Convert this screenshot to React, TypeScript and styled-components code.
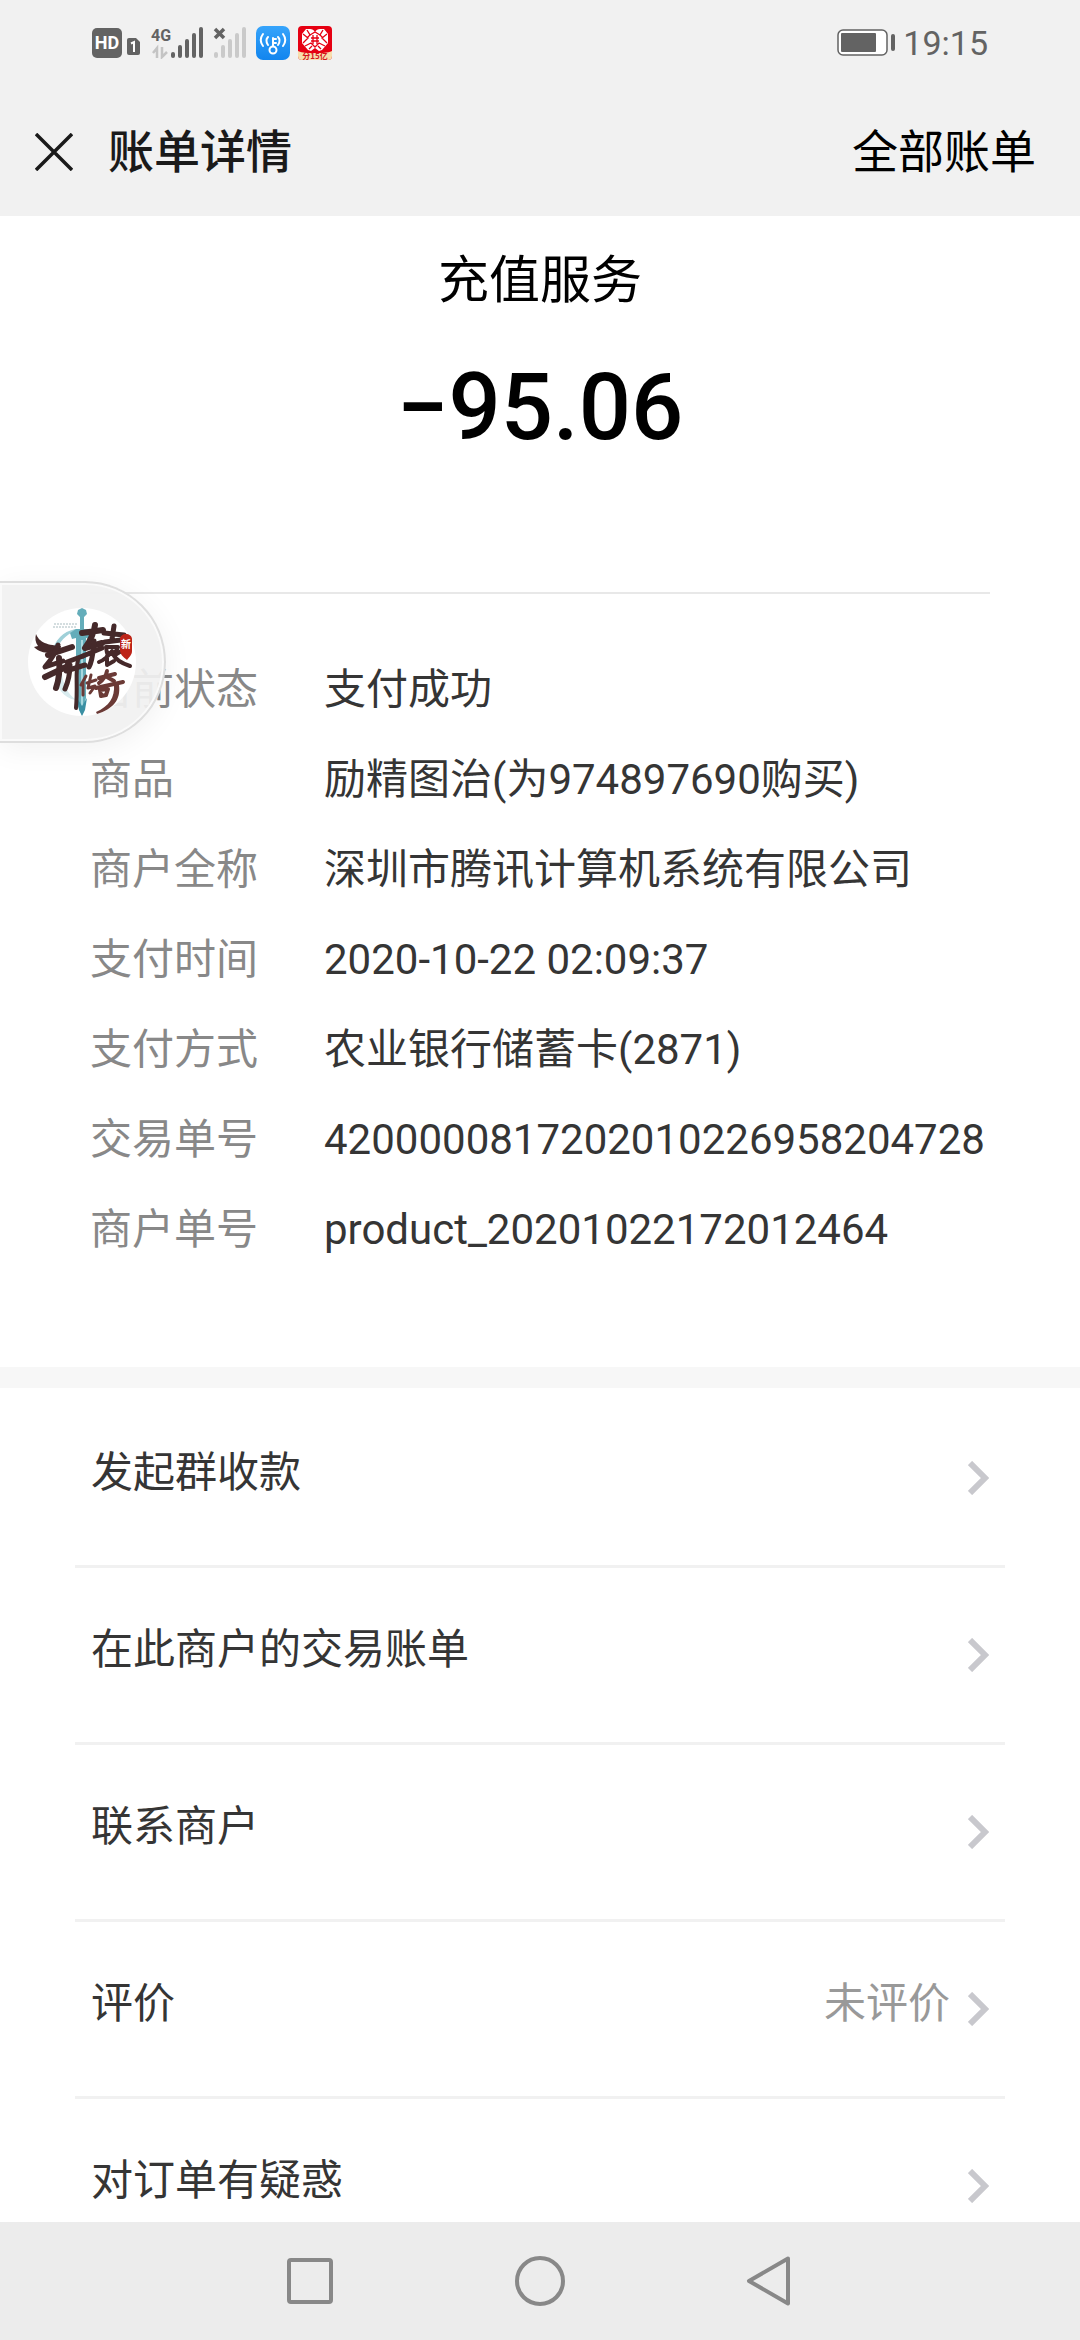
import styled, { createGlobalStyle } from "styled-components";

// colors
const barGrey = "#f1f1f1";
const statusGrey = "#636363";
const textPrimary = "#353535";
const textLabel = "#888888";
const textNote = "#999999";
const white = "#ffffff";

const details = [
  { label: "当前状态", value: "支付成功" },
  { label: "商品", value: "励精图治(为974897690购买)" },
  { label: "商户全称", value: "深圳市腾讯计算机系统有限公司" },
  { label: "支付时间", value: "2020-10-22 02:09:37" },
  { label: "支付方式", value: "农业银行储蓄卡(2871)" },
  { label: "交易单号", value: "4200000817202010226958204728" },
  { label: "商户单号", value: "product_20201022172012464" },
];

const actions = [
  { label: "发起群收款" },
  { label: "在此商户的交易账单" },
  { label: "联系商户" },
  { label: "评价", note: "未评价" },
  { label: "对订单有疑惑" },
];

const SignalBars = ({ color }: { color: string }) => (
  <g fill={color}>
    <rect x="18" y="25" width="4" height="6" rx="2" />
    <rect x="25" y="18" width="4" height="13" rx="2" />
    <rect x="32" y="12" width="4" height="19" rx="2" />
    <rect x="39" y="6" width="4" height="25" rx="2" />
    <rect x="46" y="0" width="4" height="31" rx="2" />
  </g>
);

const StatusIcons = () => (
  <IconStrip>
    <svg width="30" height="30" viewBox="0 0 30 30">
      <rect width="30" height="30" rx="5" fill={statusGrey} />
      <StatusText x="15" y="21" fontSize="18" fill={white}>
        HD
      </StatusText>
    </svg>
    <svg width="25" height="30" viewBox="-5 0 25 30">
      <path
        d="M2 10h7l4 4v11a2 2 0 0 1-2 2H2a2 2 0 0 1-2-2V12a2 2 0 0 1 2-2z"
        fill={statusGrey}
      />
      <path d="M4 15.500L7 14v10" stroke={white} strokeWidth="2" fill="none" />
    </svg>
    <svg width="56" height="32" viewBox="-6 0 56 32">
      <SignalBars color={statusGrey} />
      <StatusText x="8" y="14" fontSize="16" fill={statusGrey}>
        4G
      </StatusText>
      <g stroke="#c4c4c4" strokeWidth="2.500" fill="none">
        <path d="M0 26l4-5v10" />
        <path d="M9 20v10l5-5" />
      </g>
    </svg>
    <svg width="43" height="32" viewBox="7 0 43 32">
      <SignalBars color="#cacaca" />
      <path d="M19 2l9 9M28 2l-9 9" stroke={statusGrey} strokeWidth="3.500" />
    </svg>
    <WifiKeyIcon />
    <EnvelopeIcon />
  </IconStrip>
);

const WifiKeyIcon = () => (
  <svg width="44" height="34" viewBox="-10 0 44 34">
    <defs>
      <linearGradient id="wifiBlue" x1="0" y1="0" x2="0" y2="1">
        <stop offset="0" stopColor="#36a4fb" />
        <stop offset="1" stopColor="#1285ee" />
      </linearGradient>
    </defs>
    <rect width="34" height="34" rx="7" fill="url(#wifiBlue)" />
    <g stroke={white} strokeWidth="2" fill="none" strokeLinecap="round">
      <circle cx="17" cy="24" r="3.500" />
      <path d="M17 20v-8M17 13h3M17 17h3" />
      <path d="M12 11c-2 2-2 5 0 8M22 11c2 2 2 5 0 8" />
      <path d="M7 8c-3 4-3 8 0 12M27 8c3 4 3 8 0 12" />
    </g>
  </svg>
);

const EnvelopeIcon = () => (
  <svg width="42" height="34" viewBox="-8 0 42 34">
    <rect width="34" height="34" rx="4" fill="#e60012" />
    <path
      d="M12 3c2 0 4 1 5 3 1-2 3-3 5-3h4l4 5v9l-6 7-3 1-4-3-4 3-3-1-6-7V8l4-5z"
      fill={white}
    />
    <g stroke="#e60012" strokeWidth="1.300" fill="none">
      <path d="M5 8l5 4-5 5M29 8l-5 4 5 5M9 4l3 5-3 3M25 4l-3 5 3 3" />
      <path d="M12 9l5-3 5 3M13 12h8M13 15h8M15 9v9M19 9v9" />
      <path d="M7 20l6-3 4 4 4-4 6 3M11 23l3-3M23 23l-3-3" />
    </g>
    <path d="M0 25c5 2 9 2 17 2s12 0 17-2v5a4 4 0 0 1-4 4H4a4 4 0 0 1-4-4z" fill="#f7dfae" />
    <SealText x="17" y="33" fontSize="8" fill="#d4141c">
      分15亿
    </SealText>
  </svg>
);

const BatteryIcon = () => (
  <svg width="58" height="28" viewBox="0 0 58 28">
    <rect x="1" y="1" width="49" height="25" rx="5" fill={white} stroke={statusGrey} strokeWidth="1.500" />
    <rect x="4" y="4" width="35" height="19" rx="1" fill={statusGrey} />
    <rect x="54" y="5" width="4" height="17" rx="2" fill={statusGrey} />
  </svg>
);

const GameLogo = () => (
  <svg width="108" height="108" viewBox="0 0 108 108">
    <circle cx="54" cy="54" r="54" fill={white} />
    <path d="M25 40c5-12 15-20 28-19-12 3-20 10-24 20z" fill="#9fd0d8" />
    <path d="M28 66c0 14 7 24 20 26-8-6-13-15-14-26z" fill="#d8ebee" />
    <path d="M26 16h23M25 19h24" stroke="#a9bcc0" strokeWidth="1" strokeDasharray="2 1" />
    <g fill="#64adba">
      <path d="M50 2l4-2 4 2 1 4-3 3v14h-4V9l-3-3z" />
      <path d="M42 25l6-4h12l6 4-5 6-3-1v60l-4 17-6-13V30l-4 1z" />
    </g>
    <path d="M54 32v68" stroke="#a9d8df" strokeWidth="2" />
    <path d="M49 90l5 8 5-8-2 12-3 6-3-6z" fill="#3a8fa3" />
    {/* left character */}
    <path d="M8 26c3 7 8 11 25 12l-1 6c-12 2-20 1-26-5l4-1c-3-4-3-8-2-12z" fill="#45292a" />
    <g stroke="#45292a" fill="none" strokeLinecap="round" strokeLinejoin="round">
      <path d="M20 47l24-8" strokeWidth="6" />
      <path d="M30 37c-3 9-7 15-13 22l18-6" strokeWidth="5" />
      <path d="M17 69l23-11M31 50c1 12 0 22-3 30" strokeWidth="6" />
      <path d="M39 54l16-6M38 63l19-6M42 57c0 11-2 17-5 24" strokeWidth="5" />
      <path d="M50 52c-3 14 0 24-2 48" strokeWidth="4" />
    </g>
    {/* right character */}
    <g stroke="#45292a" fill="none" strokeLinecap="round" strokeLinejoin="round">
      <path d="M54 25l21-3M67 17c-1 9-5 16-10 23l17-5" strokeWidth="6" />
      <path d="M55 48l19-8M66 33c-1 10-1 19-5 26" strokeWidth="5" />
      <path d="M76 25l20 2M86 18l-2 13M77 34l16-2" strokeWidth="5" />
      <path d="M78 39h12l-3 6h-8zM84 43c-4 6-8 9-13 11M79 48v9l7-4M84 45c4 7 9 10 18 13M95 42l-8 5" strokeWidth="4" />
    </g>
    <g stroke="#6b3a36" fill="none" strokeLinecap="round" strokeLinejoin="round">
      <path d="M58 68l-5 9M55 74v13M59 75l9-3M63 67l-3 13 7-2-5 7" strokeWidth="3" />
      <path d="M71 70l16-4M79 63c-1 6-4 9-8 12M79 69l7 4" strokeWidth="4" />
      <path d="M68 80l27-6M72 82l8-1-2 6-5 1z" strokeWidth="4" />
    </g>
    <path d="M86 76l5 1c2 15-6 24-22 29l-1-2c13-6 19-14 18-28z" fill="#6b3a36" />
    <path d="M92 31c0-3 3-5 6-5s6 2 6 5v12c0 4-3 6-5 9-4-3-7-6-7-10z" fill="#bd2418" />
    <SealText x="98" y="40" fontSize="10" fill={white}>
      新
    </SealText>
  </svg>
);

const App = () => {
  return (
    <>
      <GlobalStyle />
      <Screen>
        <StatusBar>
          <StatusIcons />
          <StatusRight>
            <BatteryIcon />
            <Clock>19:15</Clock>
          </StatusRight>
        </StatusBar>

        <Header>
          <IconButton aria-label="关闭">
            <svg width="38" height="38" viewBox="0 0 38 38">
              <path d="M1 1l36 36M37 1L1 37" stroke="#1a1a1a" strokeWidth="3.500" />
            </svg>
          </IconButton>
          <HeaderTitle>账单详情</HeaderTitle>
          <HeaderLink href="#bills">全部账单</HeaderLink>
        </Header>

        <Content>
          <Summary>
            <Merchant>充值服务</Merchant>
            <Amount>−95.06</Amount>
            <DetailList>
              {details.map((x) => (
                <DetailRow key={x.label}>
                  <DetailLabel>{x.label}</DetailLabel>
                  <DetailValue>{x.value}</DetailValue>
                </DetailRow>
              ))}
            </DetailList>
          </Summary>

          <ActionList>
            {actions.map((x) => (
              <ActionItem key={x.label}>
                <ActionButton>
                  <ActionLabel>{x.label}</ActionLabel>
                  {x.note ? <ActionNote>{x.note}</ActionNote> : null}
                  <svg width="21" height="34" viewBox="0 0 21 34">
                    <path d="M2 2l15 15L2 32" stroke="#c8c8cd" strokeWidth="6" fill="none" />
                  </svg>
                </ActionButton>
              </ActionItem>
            ))}
          </ActionList>
        </Content>

        <FloatingBubble aria-label="浮窗">
          <GameLogo />
        </FloatingBubble>

        <SystemNav>
          <NavButton aria-label="最近任务">
            <svg width="50" height="50" viewBox="0 0 50 50">
              <rect x="4" y="4" width="42" height="42" rx="2" />
            </svg>
          </NavButton>
          <NavButton aria-label="主屏幕">
            <svg width="50" height="50" viewBox="0 0 50 50">
              <circle cx="25" cy="25" r="23" />
            </svg>
          </NavButton>
          <NavButton aria-label="返回">
            <svg width="50" height="50" viewBox="0 0 50 50">
              <path d="M43 2.500L4 25l39 22.500z" />
            </svg>
          </NavButton>
        </SystemNav>
      </Screen>
    </>
  );
};

const GlobalStyle = createGlobalStyle`
  * {
    box-sizing: border-box;
  }
  body {
    margin: 0;
    background-color: ${white};
    font-family: Roboto, "Noto Sans CJK SC", sans-serif;
  }
  button {
    padding: 0;
    border: none;
    background: none;
    font: inherit;
    cursor: pointer;
  }
  svg {
    display: block;
    flex-shrink: 0;
  }
`;

const Screen = styled.div`
  position: relative;
  display: flex;
  flex-direction: column;
  height: 100vh;
`;

const StatusBar = styled.div`
  display: flex;
  justify-content: space-between;
  align-items: center;
  height: 86px;
  padding: 0 92px;
  background-color: ${barGrey};
`;

const IconStrip = styled.div`
  display: flex;
  align-items: center;
`;

const StatusText = styled.text`
  font-family: Roboto, sans-serif;
  font-weight: 700;
  text-anchor: middle;
`;

const SealText = styled.text`
  font-family: "Noto Sans CJK SC", sans-serif;
  font-weight: 700;
  text-anchor: middle;
`;

const StatusRight = styled.div`
  display: flex;
  align-items: center;
  gap: 8px;
`;

const Clock = styled.div`
  font-size: 34px;
  line-height: 40px;
  color: ${statusGrey};
`;

const Header = styled.header`
  display: flex;
  align-items: center;
  height: 130px;
  padding: 2px 44px 0 35px;
  background-color: ${barGrey};
`;

const IconButton = styled.button`
  margin-right: 35px;
`;

const HeaderTitle = styled.h1`
  flex: 1;
  margin: 0;
  font-size: 46px;
  line-height: 60px;
  font-weight: 500;
  color: #1a1a1a;
`;

const HeaderLink = styled.a`
  font-size: 46px;
  line-height: 60px;
  color: #000000;
  text-decoration: none;
`;

const Content = styled.main`
  flex: 1;
  min-height: 0;
  overflow-y: auto;
  scrollbar-width: none;
`;

const Summary = styled.section`
  padding: 35px 90px 92px;
  border-bottom: 21px solid #f7f7f7;
`;

const Merchant = styled.div`
  font-size: 51px;
  line-height: 60px;
  text-align: center;
  color: #000000;
`;

const Amount = styled.div`
  margin: 42px 0 129px;
  font-size: 92px;
  line-height: 110px;
  font-weight: 500;
  text-align: center;
  color: #000000;
`;

const DetailList = styled.dl`
  margin: 0;
  padding-top: 51px;
  border-top: 2px solid #e8e8e8;
`;

const DetailRow = styled.div`
  display: flex;
  align-items: center;
  min-height: 90px;
  font-size: 42px;
  line-height: 60px;
`;

const DetailLabel = styled.dt`
  flex: 0 0 234px;
  color: ${textLabel};
`;

const DetailValue = styled.dd`
  flex: 1;
  margin: 0;
  color: ${textPrimary};
`;

const ActionList = styled.ul`
  margin: 0;
  padding: 0 75px;
  list-style: none;
`;

const ActionItem = styled.li`
  border-top: 3px solid #f1f1f1;
  &:first-child {
    border-top-color: transparent;
  }
`;

const ActionButton = styled.button`
  display: flex;
  align-items: center;
  gap: 18px;
  width: 100%;
  height: 174px;
  padding: 0 16px;
  font-size: 42px;
  line-height: 60px;
  text-align: left;
`;

const ActionLabel = styled.span`
  flex: 1;
  padding-bottom: 10px;
  color: ${textPrimary};
`;

const ActionNote = styled.span`
  padding-bottom: 10px;
  color: ${textNote};
`;

const FloatingBubble = styled.button`
  position: absolute;
  top: 581px;
  left: 0;
  display: flex;
  align-items: center;
  justify-content: flex-end;
  width: 166px;
  height: 162px;
  padding-right: 28px;
  border: 2px solid #dedede;
  border-left: none;
  border-radius: 0 81px 81px 0;
  background-color: rgba(241, 241, 241, 0.92);
  box-shadow: inset 0 0 0 2px #fafafa, 0 6px 30px rgba(0, 0, 0, 0.06);
`;

const SystemNav = styled.nav`
  display: flex;
  align-items: center;
  height: 118px;
  padding: 0 18%;
  background-color: #ececec;
`;

const NavButton = styled.button`
  display: flex;
  flex: 1;
  justify-content: center;
  svg {
    fill: none;
    stroke: #888888;
    stroke-width: 4;
    stroke-linejoin: round;
  }
`;

export default App;
